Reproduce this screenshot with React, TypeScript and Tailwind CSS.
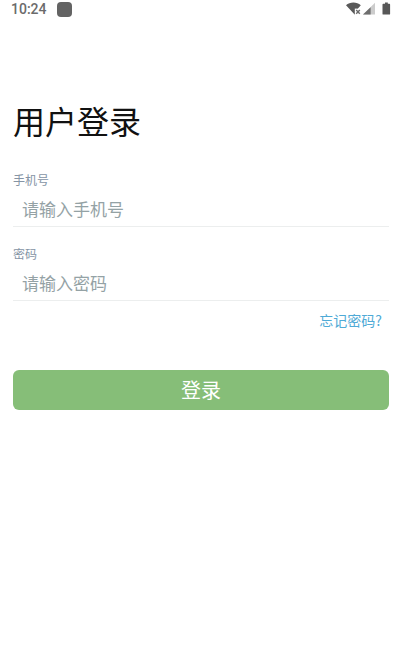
import { useState } from "react";
import type { FormEvent } from "react";

interface FieldProps {
  id: string;
  label: string;
  type: string;
  placeholder: string;
  value: string;
  onChange: (value: string) => void;
}

const StatusBar = () => {
  return (
    <header className="flex h-[18px] items-center justify-between pl-[11px] pr-2 text-[#6b6b6b]">
      <div className="flex items-center gap-[10px]">
        <span className="font-['Roboto','Noto_Sans',sans-serif] text-[14px] leading-[18px] font-medium">
          10:24
        </span>
        <span className="size-[15px] rounded-[4px] bg-[#636363]"></span>
      </div>
      <svg width="46" height="14" viewBox="0 0 46 14" aria-hidden="true">
        <path
          d="M0 3.2C2 1.4 4.6 0.5 7.4 0.5s5.4 0.9 7.4 2.7L12 6.5v5L8.6 12.4 0 3.2z"
          fill="#595959"
        />
        <path d="M8.8 6.6h6.4v6.6H8.8z" fill="#ffffff" />
        <path
          d="M10.2 8l3.6 3.8M13.8 8l-3.6 3.8"
          stroke="#6b6b6b"
          strokeWidth="1.4"
        />
        <path d="M17 12.6L29 0.8v11.8z" fill="#cccccc" />
        <path d="M17 12.6L24.6 5.2v7.4z" fill="#6e6e6e" />
        <path
          d="M37.2 1.8h1.8V0.5h2.8v1.3h1.6c.4 0 .7.3.7.7v9.4c0 .4-.3.7-.7.7h-6.2c-.4 0-.7-.3-.7-.7V2.5c0-.4.3-.7.7-.7z"
          fill="#575757"
        />
      </svg>
    </header>
  );
};

const Field = ({ id, label, type, placeholder, value, onChange }: FieldProps) => {
  return (
    <div className="flex flex-col gap-1">
      <label htmlFor={id} className="text-[12px] leading-4 text-[#8594a5]">
        {label}
      </label>
      <input
        id={id}
        type={type}
        placeholder={placeholder}
        value={value}
        onChange={(e) => onChange(e.target.value)}
        className="h-[35px] w-full border-b border-[#eceeee] bg-transparent px-[9px] pb-[2px] text-[17px] text-gray-800 outline-none placeholder:text-[#94a2a5]"
      />
    </div>
  );
};

const App = () => {
  const [phone, setPhone] = useState<string>("");
  const [password, setPassword] = useState<string>("");

  const handleSubmit = (e: FormEvent) => {
    e.preventDefault();
  };

  return (
    <div className="min-h-screen bg-white font-['Noto_Sans_CJK_SC',sans-serif]">
      <StatusBar />
      <main className="pt-[82px] pr-[11px] pl-[13px]">
        <h1 className="text-[32px] leading-10 text-[#111111]">用户登录</h1>
        <form className="mt-8 flex flex-col" onSubmit={handleSubmit}>
          <div className="flex flex-col gap-[19px]">
            <Field
              id="phone"
              label="手机号"
              type="tel"
              placeholder="请输入手机号"
              value={phone}
              onChange={setPhone}
            />
            <Field
              id="password"
              label="密码"
              type="password"
              placeholder="请输入密码"
              value={password}
              onChange={setPassword}
            />
          </div>
          <a
            href="#forgot"
            className="mt-[9px] mr-[7px] self-end text-[14px] leading-5 text-[#4faad6]"
          >
            忘记密码?
          </a>
          <button
            type="submit"
            className="mt-10 h-10 w-full cursor-pointer rounded-md bg-[#86be78] text-[20px] leading-none text-white"
          >
            登录
          </button>
        </form>
      </main>
    </div>
  );
};

export default App;
